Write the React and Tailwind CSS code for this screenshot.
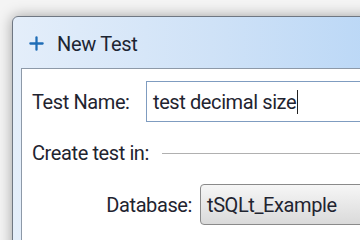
import { Plus } from "lucide-react";

function Field({ children, className = "" }) {
  return (
    <div
      className={`h-[41px] flex items-center border bg-white ${className}`}
    >
      {children}
    </div>
  );
}

export default function App() {
  return (
    <div
      className="w-[360px] h-[240px] overflow-hidden bg-[#f4f4f4] pl-[12px] pt-[16px]"
      style={{ fontFamily: 'Roboto, "Noto Sans", sans-serif' }}
    >
      {/* dialog window */}
      <div className="w-[400px] h-[260px] rounded-tl-[6px] border border-[#6f7782] bg-gradient-to-r from-[#e4eefa] via-[#cfe2f7] to-[#b6d5f6] shadow-[0_0_14px_rgba(0,0,0,0.35)]">
        {/* title bar */}
        <div className="h-[51px] flex items-center pl-[13px] pt-[2px] text-[#1c2533]">
          <Plus className="w-[21px] h-[21px] text-[#1f6db6]" strokeWidth={2.6} />
          <span className="ml-[10px] text-[20px] tracking-[-0.3px]">New Test</span>
        </div>

        {/* body */}
        <div className="ml-[8px] h-full border border-[#8d99a8] bg-white pl-[10px] text-[20px] text-[#1f2430] tracking-[-0.4px]">
          <div className="flex items-center mt-[12px]">
            <span className="w-[114px]">Test Name:</span>
            <Field className="flex-1 border-[#7f9cc0] pl-[6px]">
              <span>test decimal size</span>
              <span className="w-[1px] h-[24px] bg-[#222] ml-[1px]" />
            </Field>
          </div>

          <div className="flex items-center mt-[16px]">
            <span>Create test in:</span>
            <div className="flex-1 ml-[13px] h-[1px] bg-[#b0b0b0]" />
          </div>

          <div className="flex items-center mt-[16px]">
            <span className="w-[168px] text-right pr-[8px]">Database:</span>
            <div className="flex-1 h-[41px] flex items-center pl-[6px] rounded-[4px] border border-[#8a8a8a] bg-gradient-to-b from-[#f6f6f6] to-[#dadada]">
              tSQLt_Example
            </div>
          </div>
        </div>
      </div>
    </div>
  );
}
